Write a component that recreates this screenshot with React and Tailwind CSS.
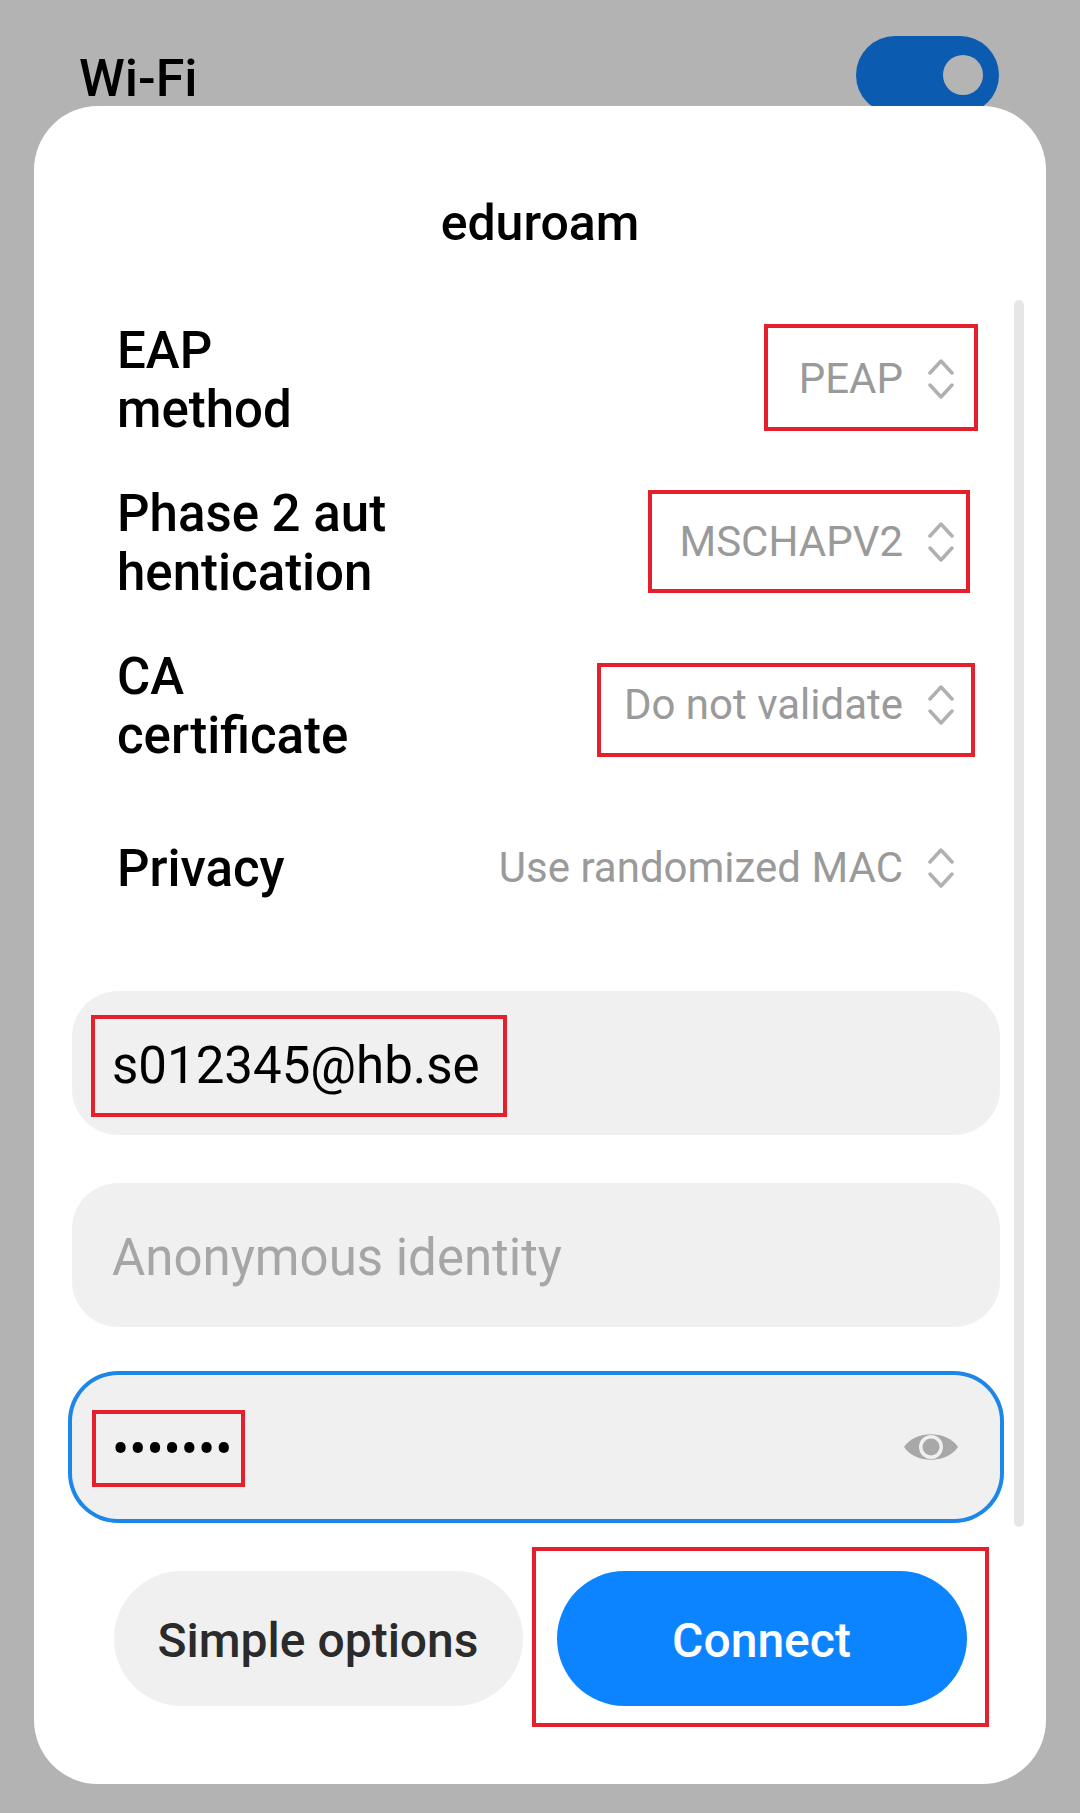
import React from 'react';

const Chevrons = () => (
  <svg
    width="26"
    height="42"
    viewBox="0 0 26 42"
    fill="none"
    stroke="#b0b0b0"
    strokeWidth="3.5"
    strokeLinecap="round"
    strokeLinejoin="round"
  >
    <path d="M2 15 L13 3 L24 15" />
    <path d="M2 27 L13 39 L24 27" />
  </svg>
);

const EyeIcon = () => (
  <svg width="56" height="36" viewBox="0 0 56 36">
    <path d="M1 18 C12 1 44 1 55 18 C44 35 12 35 1 18 Z" fill="#a8a8a8" />
    <circle cx="28" cy="18" r="12" fill="#f0f0f0" />
    <circle cx="28" cy="18" r="8.5" fill="#a8a8a8" />
  </svg>
);

const rows = [
  {
    label: ['EAP', 'method'],
    value: 'PEAP',
    box: 'absolute -left-[35px] -right-[24px] -top-[34px] -bottom-[31px] border-4 border-[#e3202b]',
  },
  {
    label: ['Phase 2 aut', 'hentication'],
    value: 'MSCHAPV2',
    box: 'absolute -left-[31px] -right-[16px] -top-[31px] -bottom-[30px] border-4 border-[#e3202b]',
  },
  {
    label: ['CA', 'certificate'],
    value: 'Do not validate',
    box: 'absolute -left-[27px] -right-[21px] -top-[21px] -bottom-[31px] border-4 border-[#e3202b]',
  },
  {
    label: ['Privacy'],
    value: 'Use randomized MAC',
    box: null,
  },
];

const App = () => {
  return (
    <div className="min-h-[1813px] w-[1080px] bg-[#b3b3b3] pt-[36px] font-[Roboto,sans-serif]">
      {/* settings page behind the dialog */}
      <div className="flex justify-between h-[78px] pl-[79px] pr-[81px]">
        <div className="mt-[13px] text-[52px] leading-[60px] font-medium text-black">Wi-Fi</div>
        <div className="w-[143px] h-[78px] rounded-full bg-[#0b5cb0] flex items-center justify-end pr-[16px]">
          <div className="w-[40px] h-[40px] rounded-full bg-[#b4b4b4]" />
        </div>
      </div>

      {/* dialog */}
      <div className="relative -mt-[8px] mx-[34px] bg-white rounded-[64px] pt-[87px] pb-[78px]">
        <h1 className="text-center text-[50px] leading-[60px] font-medium text-black">eduroam</h1>

        <div className="mt-[45px] flex pl-[38px] pr-[21px] gap-[14px]">
          <div className="w-[928px] pb-[10px]">
            {rows.map((row) => (
              <div key={row.value} className="h-[163px] flex items-center justify-between pl-[45px] pr-[46px]">
                <div className="text-[51px] leading-[59px] font-medium text-black">
                  {row.label.map((line) => (
                    <div key={line}>{line}</div>
                  ))}
                </div>
                <div className="relative flex items-center h-[42px] gap-[25px] mb-[2px]">
                  <span className="text-[42px] leading-[42px] text-[#9a9a9a]">{row.value}</span>
                  <Chevrons />
                  {row.box && <div className={row.box} />}
                </div>
              </div>
            ))}

            <div className="mt-[41px] flex flex-col gap-[48px]">
              <div className="relative h-[144px] pt-[6px] rounded-[46px] bg-[#f0f0f0] flex items-center pl-[40px]">
                <span className="text-[51px] text-black">s012345@hb.se</span>
                <div className="absolute left-[19px] top-[24px] w-[416px] h-[102px] border-4 border-[#e3202b]" />
              </div>
              <div className="h-[144px] pt-[6px] rounded-[46px] bg-[#f0f0f0] flex items-center pl-[40px]">
                <span className="text-[51px] text-[#a6a6a6]">Anonymous identity</span>
              </div>
              <div className="relative h-[144px] rounded-[46px] bg-[#f0f0f0] ring-4 ring-[#1d87e9] flex items-center justify-between pl-[40px] pr-[41px]">
                <span className="text-[51px] pt-[6px] text-black">•••••••</span>
                <EyeIcon />
                <div className="absolute left-[20px] top-[35px] w-[153px] h-[77px] border-4 border-[#e3202b]" />
              </div>
            </div>
          </div>
          <div className="w-[10px] my-[2px] rounded-full bg-[#e6e6e6]" />
        </div>

        <div className="mt-[42px] flex justify-center gap-[34px]">
          <button className="w-[409px] h-[135px] pt-[4px] rounded-full bg-[#f0f0f0] text-[48px] font-medium text-[#2b2b2b]">
            Simple options
          </button>
          <div className="relative">
            <button className="w-[410px] h-[135px] pt-[4px] rounded-full bg-[#0d84ff] text-[48px] font-medium text-white">
              Connect
            </button>
            <div className="absolute -left-[25px] -right-[22px] -top-[24px] -bottom-[21px] border-4 border-[#e3202b]" />
          </div>
        </div>
      </div>
    </div>
  );
};

export default App;
